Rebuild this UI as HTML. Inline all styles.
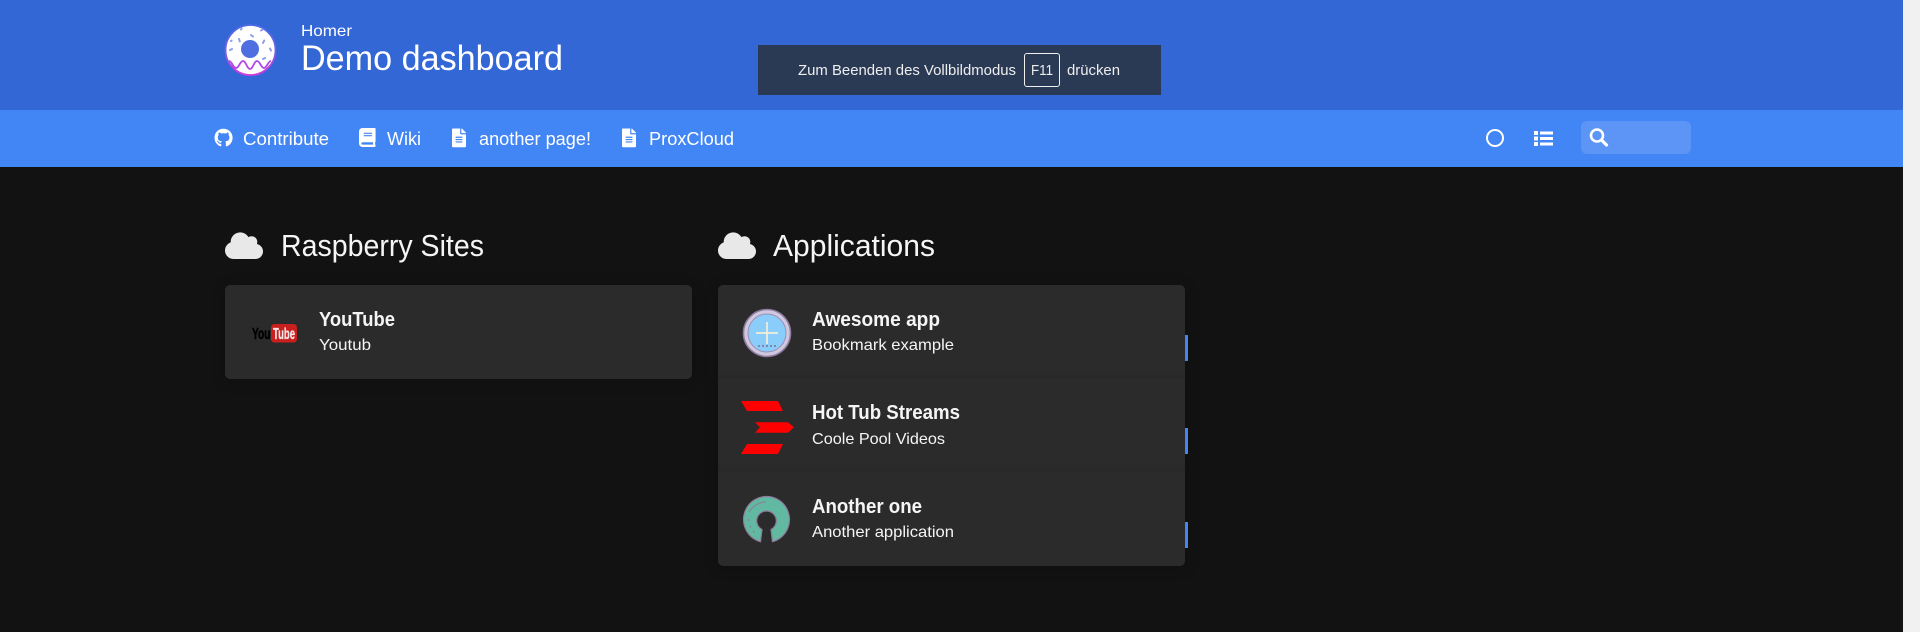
<!DOCTYPE html>
<html lang="en"><head><meta charset="utf-8"><title>Demo dashboard</title>
<style>
html,body{margin:0;padding:0;width:1920px;height:632px;overflow:hidden;background:#121212}
div{position:absolute;box-sizing:border-box}
svg{position:absolute;left:0;top:0}
text{font-family:"Liberation Sans",sans-serif;fill:#fff}
.t{fill:#f5f5f5;font-weight:bold;font-size:20px}
.s{fill:#f5f5f5;font-size:16px}
.n{font-size:18px}
</style></head><body>
<div style="left:0;top:0;width:1903px;height:110px;background:#3367d6"></div>
<div style="left:0;top:110px;width:1903px;height:57px;background:#4285f4"></div>
<div style="left:1903px;top:0;width:17px;height:632px;background:#f1f1f1"></div>
<div style="left:758px;top:45px;width:403px;height:50px;background:#2a3a55"></div>
<div style="left:1024px;top:53px;width:36px;height:34px;border:1px solid #f0f0f0;border-radius:3px"></div>
<div style="left:1581px;top:121px;width:110px;height:33px;background:#5c95f6;border-radius:6px"></div>
<div style="left:225px;top:285px;width:467px;height:94px;background:#2b2b2b;border-radius:5px;box-shadow:0 2px 15px rgba(0,0,0,.2)"></div>
<div style="left:718px;top:285px;width:467px;height:281px;background:#2b2b2b;border-radius:5px;box-shadow:0 2px 15px rgba(0,0,0,.2)"></div>
<div style="left:718px;top:369px;width:467px;height:10px;background:linear-gradient(#2b2b2b,#282828)"></div>
<div style="left:718px;top:462px;width:467px;height:10px;background:linear-gradient(#2b2b2b,#282828)"></div>
<div style="left:1185px;top:335px;width:3px;height:26px;background:#4285f4"></div>
<div style="left:1185px;top:428px;width:3px;height:26px;background:#4285f4"></div>
<div style="left:1185px;top:522px;width:3px;height:26px;background:#4285f4"></div>

<svg width="1920" height="632" viewBox="0 0 1920 632" xmlns="http://www.w3.org/2000/svg">
<defs><linearGradient id="dg" x1="0" y1="0" x2="0" y2="1"><stop offset="0" stop-color="#4a6ae8"/><stop offset=".55" stop-color="#7a5ce0"/><stop offset="1" stop-color="#d23be0"/></linearGradient></defs>

<!-- donut -->
<circle cx="250.500" cy="50" r="25" fill="#fff" stroke="url(#dg)" stroke-width="1.800"/>
<path d="M229 61c3 0 4 7 7 7s4-7 7-7 4 8 7 8 4-8 7-8 4 7 7 7 4-7 7-7" fill="none" stroke="#b048e8" stroke-width="1.800"/>
<circle cx="250" cy="49" r="9" fill="#4f6fe0"/>
<g stroke="#8f9eec" stroke-width="2" stroke-linecap="round">
<path d="M241 29.500l.6-1M251 35l2 1.500M261 30.500l1.500-.8M239 39l.8 2.500M263 43l1.200-2.500M230 50l2-1M270 48.500l1 2M231 41l.6-.3M263 59l2-1"/>
</g>

<!-- header text -->
<text x="301" y="36" font-size="16" textLength="51" lengthAdjust="spacingAndGlyphs">Homer</text>
<text x="301" y="70" font-size="35" textLength="262" lengthAdjust="spacingAndGlyphs">Demo dashboard</text>

<!-- toast -->
<text x="798" y="75" font-size="15" textLength="218" lengthAdjust="spacingAndGlyphs" style="fill:#eee">Zum Beenden des Vollbildmodus</text>
<text x="1031" y="75" font-size="15" textLength="22" lengthAdjust="spacingAndGlyphs" style="fill:#eee">F11</text>
<text x="1067" y="75" font-size="15" textLength="53" lengthAdjust="spacingAndGlyphs" style="fill:#eee">drücken</text>

<!-- nav icons -->
<path transform="translate(214.500 128.500) scale(.0365)" fill="#fff" d="M244.800 8C106.100 8 0 113.300 0 252c0 110.900 69.800 205.800 169.500 239.200 12.800 2.300 17.300-5.600 17.300-12.100 0-6.200-.3-40.400-.3-61.400 0 0-70 15-84.700-29.800 0 0-11.400-29.100-27.800-36.600 0 0-22.900-15.700 1.600-15.400 0 0 24.900 2 38.600 25.800 21.900 38.600 58.600 27.500 72.900 20.900 2.300-16 8.800-27.100 16-33.700-55.900-6.200-112.300-14.300-112.300-110.500 0-27.500 7.600-41.300 23.600-58.900-2.600-6.500-11.100-33.300 2.600-67.900 20.900-6.500 69 27 69 27 20-5.600 41.500-8.500 62.800-8.500s42.800 2.900 62.800 8.500c0 0 48.100-33.600 69-27 13.700 34.700 5.200 61.400 2.600 67.900 16 17.700 25.800 31.500 25.800 58.900 0 96.500-58.900 104.200-114.800 110.500 9.200 7.900 17 22.900 17 46.400 0 33.700-.3 75.400-.3 83.600 0 6.500 4.600 14.400 17.300 12.100C428.200 457.800 496 362.900 496 252 496 113.300 383.500 8 244.800 8z"/>
<path transform="translate(359 128) scale(.037)" fill="#fff" d="M448 360V24c0-13.300-10.700-24-24-24H96C43 0 0 43 0 96v320c0 53 43 96 96 96h328c13.300 0 24-10.700 24-24v-16c0-7.500-3.500-14.300-8.900-18.700-4.200-15.400-4.200-59.300 0-74.700 5.400-4.300 8.900-11.100 8.900-18.600zM128 134c0-3.300 2.700-6 6-6h212c3.300 0 6 2.700 6 6v20c0 3.300-2.700 6-6 6H134c-3.300 0-6-2.700-6-6v-20zm0 64c0-3.300 2.700-6 6-6h212c3.300 0 6 2.700 6 6v20c0 3.300-2.700 6-6 6H134c-3.300 0-6-2.700-6-6v-20zm253.400 250H96c-17.700 0-32-14.300-32-32 0-17.600 14.400-32 32-32h285.400c-1.900 17.100-1.900 46.900 0 64z"/>
<path transform="translate(452 128.500) scale(.0365)" fill="#fff" d="M224 136V0H24C10.700 0 0 10.700 0 24v464c0 13.300 10.700 24 24 24h336c13.300 0 24-10.700 24-24V160H248c-13.200 0-24-10.800-24-24zm64 236c0 6.600-5.400 12-12 12H108c-6.600 0-12-5.400-12-12v-8c0-6.600 5.400-12 12-12h168c6.600 0 12 5.400 12 12v8zm0-64c0 6.600-5.400 12-12 12H108c-6.600 0-12-5.400-12-12v-8c0-6.600 5.400-12 12-12h168c6.600 0 12 5.400 12 12v8zm0-72v8c0 6.600-5.400 12-12 12H108c-6.600 0-12-5.400-12-12v-8c0-6.600 5.400-12 12-12h168c6.600 0 12 5.400 12 12zm96-114.100v6.100H256V0h6.100c6.400 0 12.500 2.500 17 7l97.900 98c4.500 4.500 7 10.600 7 16.900z"/>
<path transform="translate(622 128.500) scale(.0365)" fill="#fff" d="M224 136V0H24C10.700 0 0 10.700 0 24v464c0 13.300 10.700 24 24 24h336c13.300 0 24-10.700 24-24V160H248c-13.200 0-24-10.800-24-24zm64 236c0 6.600-5.400 12-12 12H108c-6.600 0-12-5.400-12-12v-8c0-6.600 5.400-12 12-12h168c6.600 0 12 5.400 12 12v8zm0-64c0 6.600-5.400 12-12 12H108c-6.600 0-12-5.400-12-12v-8c0-6.600 5.400-12 12-12h168c6.600 0 12 5.400 12 12v8zm0-72v8c0 6.600-5.400 12-12 12H108c-6.600 0-12-5.400-12-12v-8c0-6.600 5.400-12 12-12h168c6.600 0 12 5.400 12 12zm96-114.100v6.100H256V0h6.100c6.400 0 12.500 2.500 17 7l97.900 98c4.500 4.500 7 10.600 7 16.900z"/>

<!-- nav text -->
<text class="n" x="243" y="145" textLength="86" lengthAdjust="spacingAndGlyphs">Contribute</text>
<text class="n" x="387" y="145" textLength="34" lengthAdjust="spacingAndGlyphs">Wiki</text>
<text class="n" x="479" y="145" textLength="112" lengthAdjust="spacingAndGlyphs">another page!</text>
<text class="n" x="649" y="145" textLength="85" lengthAdjust="spacingAndGlyphs">ProxCloud</text>

<!-- right nav -->
<circle cx="1495" cy="138" r="8" fill="none" stroke="#fff" stroke-width="2"/>
<g fill="#fff">
<rect x="1534" y="131" width="4" height="4"/><rect x="1534" y="136.500" width="4" height="4"/><rect x="1534" y="142" width="4" height="4"/>
<rect x="1540" y="131.500" width="13" height="3"/><rect x="1540" y="137" width="13" height="3"/><rect x="1540" y="142.500" width="13" height="3"/>
</g>
<circle cx="1597" cy="135.500" r="6" fill="none" stroke="#fff" stroke-width="2.600"/>
<path d="M1601.500 140l5 5" stroke="#fff" stroke-width="3.200" stroke-linecap="round"/>

<!-- clouds -->
<path transform="translate(225 230.500) scale(.0594)" fill="#e8e8e8" d="M537.600 226.600c4.100-10.700 6.400-22.400 6.400-34.600 0-53-43-96-96-96-19.700 0-38.100 6-53.300 16.200C367 64.200 315.300 32 256 32c-88.400 0-160 71.600-160 160 0 2.700.1 5.400.2 8.100C40.200 219.800 0 273.200 0 336c0 79.500 64.500 144 144 144h368c70.700 0 128-57.300 128-128 0-61.900-44-113.600-102.400-125.400z"/>
<path transform="translate(718 230.500) scale(.0594)" fill="#e8e8e8" d="M537.600 226.600c4.100-10.700 6.400-22.400 6.400-34.600 0-53-43-96-96-96-19.700 0-38.100 6-53.300 16.200C367 64.200 315.300 32 256 32c-88.400 0-160 71.600-160 160 0 2.700.1 5.400.2 8.100C40.200 219.800 0 273.200 0 336c0 79.500 64.500 144 144 144h368c70.700 0 128-57.300 128-128 0-61.900-44-113.600-102.400-125.400z"/>

<!-- section titles -->
<text x="281" y="256" font-size="31" textLength="203" lengthAdjust="spacingAndGlyphs" style="fill:#f5f5f5">Raspberry Sites</text>
<text x="773" y="256" font-size="31" textLength="162" lengthAdjust="spacingAndGlyphs" style="fill:#f5f5f5">Applications</text>

<!-- youtube logo -->
<text x="252" y="339" font-size="16" font-weight="bold" textLength="18.500" lengthAdjust="spacingAndGlyphs" style="fill:#000;stroke:#000;stroke-width:.5">You</text>
<rect x="271" y="324" width="26" height="18.500" rx="3.500" fill="#c9201f"/>
<text x="273" y="339" font-size="16" font-weight="bold" textLength="22" lengthAdjust="spacingAndGlyphs" style="fill:#f5e6e6;stroke:#f5e6e6;stroke-width:.3">Tube</text>

<!-- awesome icon -->
<circle cx="767" cy="333" r="23.500" fill="#cfc9e0" stroke="#8f7a9e" stroke-width="1.600"/>
<circle cx="767" cy="333" r="19" fill="#8accfa" stroke="#a08cb4" stroke-width="1"/>
<path d="M756 333h22M767 322v22" stroke="#f3eed8" stroke-width="1.700"/>
<path d="M758 346h18" stroke="#7b6f8f" stroke-width="1.400" stroke-dasharray="2 2"/>

<!-- red icon -->
<g fill="#ff0000">
<polygon points="741,401 778,401 783,411 747,411"/>
<polygon points="755,422.300 788,422.300 794,427.300 788,432.700 755,432.700 760,427.300"/>
<polygon points="747,444 783,444 778,454 741,454"/>
</g>

<!-- open source icon -->
<path d="M760.500 541.700A23 23 0 1 1 772.500 541.700L771 529.500A9.800 9.800 0 1 0 762 529.500z" fill="#62b9a1" stroke="#8e7a9c" stroke-width="1.200"/>
<path d="M749 512c3-5 9-10 17-10" fill="none" stroke="#8e7a9c" stroke-width="1.200" opacity=".8"/>
<path d="M748.500 519v2M750 526l1 1.500M753 531l1.500 1.500" stroke="#8e7a9c" stroke-width="1.500" opacity=".8"/>

<!-- card text -->
<text class="t" x="319" y="326" textLength="76" lengthAdjust="spacingAndGlyphs">YouTube</text>
<text class="s" x="319" y="350" textLength="52" lengthAdjust="spacingAndGlyphs">Youtub</text>
<text class="t" x="812" y="326" textLength="128" lengthAdjust="spacingAndGlyphs">Awesome app</text>
<text class="s" x="812" y="350" textLength="142" lengthAdjust="spacingAndGlyphs">Bookmark example</text>
<text class="t" x="812" y="419" textLength="148" lengthAdjust="spacingAndGlyphs">Hot Tub Streams</text>
<text class="s" x="812" y="444" textLength="133" lengthAdjust="spacingAndGlyphs">Coole Pool Videos</text>
<text class="t" x="812" y="513" textLength="110" lengthAdjust="spacingAndGlyphs">Another one</text>
<text class="s" x="812" y="537" textLength="142" lengthAdjust="spacingAndGlyphs">Another application</text>
</svg>
</body></html>
